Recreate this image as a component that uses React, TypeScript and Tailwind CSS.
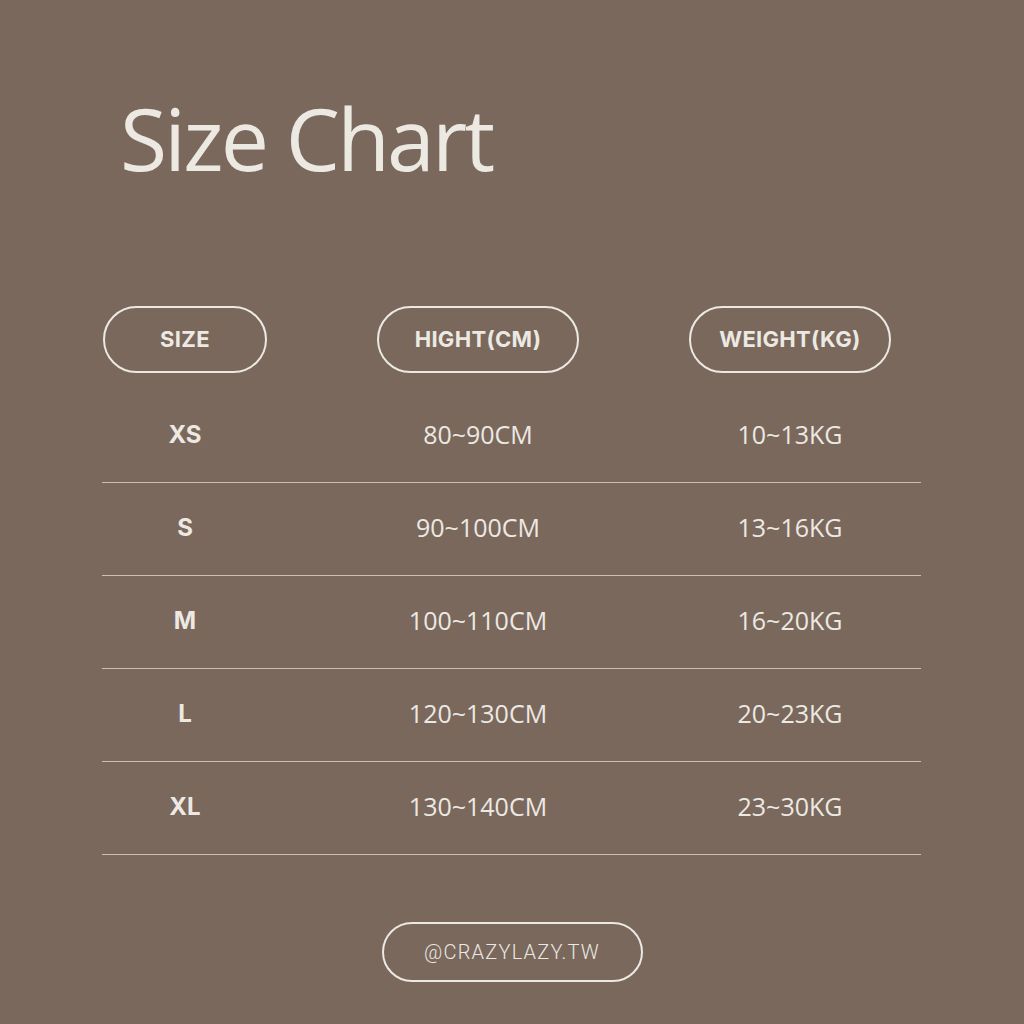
import React from 'react'

const rows = [
  { size: 'XS', height: '80~90CM', weight: '10~13KG' },
  { size: 'S', height: '90~100CM', weight: '13~16KG' },
  { size: 'M', height: '100~110CM', weight: '16~20KG' },
  { size: 'L', height: '120~130CM', weight: '20~23KG' },
  { size: 'XL', height: '130~140CM', weight: '23~30KG' },
]

const Pill = ({ label, width }: { label: string; width: string }) => (
  <div
    className={`${width} h-[67px] rounded-full border-2 border-[#ece9e3] flex items-center justify-center text-[22px] tracking-[0.3px] font-bold text-[#ece9e3] font-['Inter','Liberation_Sans',sans-serif]`}
  >
    {label}
  </div>
)

const App = () => {
  return (
    <div className="w-[1024px] h-[1024px] bg-[#7a685c] text-[#ece9e3] font-['Open_Sans',sans-serif] flex flex-col">
      <h1 className="ml-[120px] mt-[78px] text-[86px] leading-[120px] tracking-[-2.8px]">Size Chart</h1>

      <div className="ml-[102px] mt-[108px] w-[819px]">
        <div className="grid grid-cols-[166px_420px_204px] items-center">
          <div className="flex justify-center">
            <Pill label="SIZE" width="w-[164px]" />
          </div>
          <div className="flex justify-center">
            <Pill label="HIGHT(CM)" width="w-[202px]" />
          </div>
          <div className="flex justify-center">
            <Pill label="WEIGHT(KG)" width="w-[202px]" />
          </div>
        </div>

        <div className="mt-[17px]">
          {rows.map((r) => (
            <div key={r.size} className="h-[93px] pb-[3px] border-b border-[#c9bfb6] grid grid-cols-[166px_420px_204px] items-center">
              <div className="text-center text-[24px] font-bold font-['Inter','Liberation_Sans',sans-serif]">{r.size}</div>
              <div className="text-center text-[25px]">{r.height}</div>
              <div className="text-center text-[25px]">{r.weight}</div>
            </div>
          ))}
        </div>
      </div>

      <div className="mt-[67px] self-center w-[261px] h-[60px] rounded-full border-2 border-[#ece9e3] flex items-center justify-center text-[20px] tracking-[1.2px] font-['Roboto',sans-serif] font-light">
        @CRAZYLAZY.TW
      </div>
    </div>
  )
}

export default App
